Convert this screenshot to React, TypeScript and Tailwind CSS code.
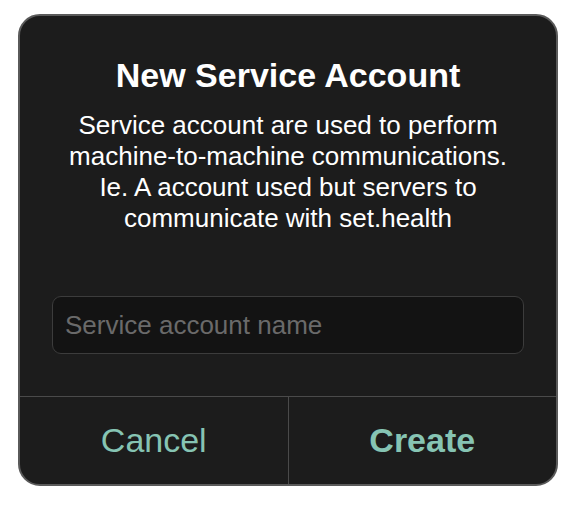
export default function App() {
  return (
    <div className="w-[574px] h-[506px] bg-white" style={{ fontFamily: '"Liberation Sans", Arial, sans-serif' }}>
      <div className="absolute left-[18px] top-[14px] w-[540px] h-[472px] rounded-[22px] border-2 border-[#5a5a5a] bg-[#1c1c1c] flex flex-col overflow-hidden">
        <div className="flex flex-col items-center pt-[38px] px-[32px]">
          <h1 className="text-white font-bold text-[34px] leading-[42px]">New Service Account</h1>
          <p className="text-white text-[26px] leading-[31px] text-center mt-[14px] max-w-[450px]">
            Service account are used to perform machine-to-machine communications. Ie. A account used but servers to communicate with set.health
          </p>
        </div>
        <div className="px-[32px] mt-[62px]">
          <input
            placeholder="Service account name"
            className="w-full h-[58px] rounded-[9px] border border-[#3c3c3c] bg-[#131313] px-[12px] text-[26px] text-white placeholder:text-[#6a6a6a] outline-none"
          />
        </div>
        <div className="mt-auto h-[88px] border-t border-[#4a4a4a] flex">
          <button className="flex-1 flex items-center justify-center text-[34px] text-[#86c4b3] border-r border-[#4a4a4a]">Cancel</button>
          <button className="flex-1 flex items-center justify-center text-[34px] font-bold text-[#86c4b3]">Create</button>
        </div>
      </div>
    </div>
  );
}
